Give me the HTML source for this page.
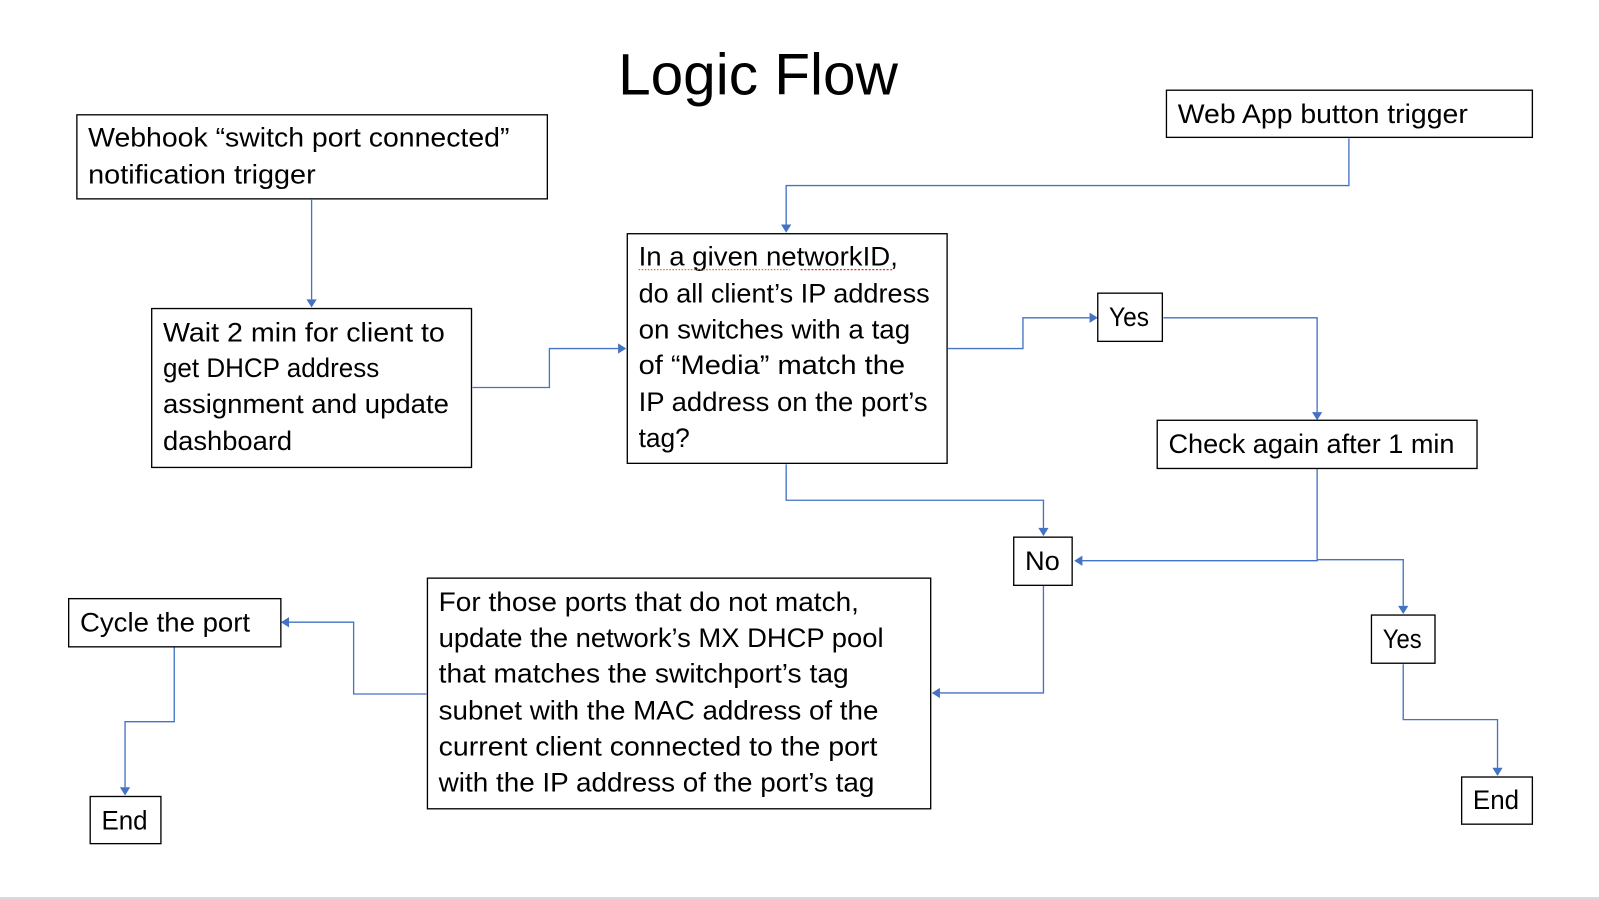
<!DOCTYPE html>
<html><head><meta charset="utf-8"><style>
html,body{margin:0;padding:0;background:#fff;}
svg{display:block;}
text{font-family:"Liberation Sans",sans-serif;fill:#000;}
.t{font-size:26px;}
.b{fill:#fff;stroke:#000;stroke-width:1.3;}
.l{fill:none;stroke:#4472c4;stroke-width:1.3;}
.a{fill:#4472c4;}
</style></head><body>
<svg width="1599" height="899" viewBox="0 0 1560 877" preserveAspectRatio="none">
<text x="603" y="92" font-size="57" textLength="273" lengthAdjust="spacingAndGlyphs">Logic Flow</text>
<line x1="0" y1="876" x2="1560" y2="876" stroke="#d9d9d9" stroke-width="2"/>

<path class="l" d="M304 195 V292"/><path class="a" d="M299 292 h10 l-5 8z"/>
<path class="l" d="M1316 135 V181 H767 V219"/><path class="a" d="M762 219 h10 l-5 8z"/>
<path class="l" d="M461 378 H536 V340 H603"/><path class="a" d="M603 335 v10 l8 -5z"/>
<path class="l" d="M925 340 H998 V310 H1063"/><path class="a" d="M1063 305 v10 l8 -5z"/>
<path class="l" d="M1135 310 H1285 V402"/><path class="a" d="M1280 402 h10 l-5 8z"/>
<path class="l" d="M767 453 V488 H1018 V515"/><path class="a" d="M1013 515 h10 l-5 8z"/>
<path class="l" d="M1285 457 V547 H1056"/><path class="a" d="M1056 542 v10 l-8 -5z"/>
<path class="l" d="M1285 546 H1369 V591"/><path class="a" d="M1364 591 h10 l-5 8z"/>
<path class="l" d="M1369 648 V702 H1461 V749"/><path class="a" d="M1456 749 h10 l-5 8z"/>
<path class="l" d="M1018 571 V676 H917"/><path class="a" d="M917 671 v10 l-8 -5z"/>
<path class="l" d="M416 677 H345 V607 H282"/><path class="a" d="M282 602 v10 l-8 -5z"/>
<path class="l" d="M170 631 V704 H122 V768"/><path class="a" d="M117 768 h10 l-5 8z"/>

<rect class="b" x="75" y="112" width="459" height="82"/>
<text class="t" x="86" y="143" textLength="411" lengthAdjust="spacingAndGlyphs">Webhook “switch port connected”</text>
<text class="t" x="86" y="179" textLength="222" lengthAdjust="spacingAndGlyphs">notification trigger</text>

<rect class="b" x="1138" y="88" width="357" height="46"/>
<text class="t" x="1149" y="120" textLength="283" lengthAdjust="spacingAndGlyphs">Web App button trigger</text>

<rect class="b" x="148" y="301" width="312" height="155"/>
<text class="t" x="159" y="333" textLength="275" lengthAdjust="spacingAndGlyphs">Wait 2 min for client to</text>
<text class="t" x="159" y="368" textLength="211" lengthAdjust="spacingAndGlyphs">get DHCP address</text>
<text class="t" x="159" y="403" textLength="279" lengthAdjust="spacingAndGlyphs">assignment and update</text>
<text class="t" x="159" y="439" textLength="126" lengthAdjust="spacingAndGlyphs">dashboard</text>

<rect class="b" x="612" y="228" width="312" height="224"/>
<text class="t" x="623" y="259" textLength="253" lengthAdjust="spacingAndGlyphs">In a given networkID,</text>
<path d="M623 263 H771" stroke="#c08030" stroke-width="1.2" stroke-dasharray="1.5 1.5"/>
<path d="M781 263 H871" stroke="#e03030" stroke-width="1.2" stroke-dasharray="2 1.5"/>
<text class="t" x="623" y="295" textLength="284" lengthAdjust="spacingAndGlyphs">do all client’s IP address</text>
<text class="t" x="623" y="330" textLength="265" lengthAdjust="spacingAndGlyphs">on switches with a tag</text>
<text class="t" x="623" y="365" textLength="260" lengthAdjust="spacingAndGlyphs">of “Media” match the</text>
<text class="t" x="623" y="401" textLength="282" lengthAdjust="spacingAndGlyphs">IP address on the port’s</text>
<text class="t" x="623" y="436" textLength="50" lengthAdjust="spacingAndGlyphs">tag?</text>

<rect class="b" x="1071" y="286" width="63" height="47"/>
<text class="t" x="1082" y="318" textLength="39" lengthAdjust="spacingAndGlyphs">Yes</text>

<rect class="b" x="1129" y="410" width="312" height="47"/>
<text class="t" x="1140" y="442" textLength="279" lengthAdjust="spacingAndGlyphs">Check again after 1 min</text>

<rect class="b" x="989" y="524" width="57" height="47"/>
<text class="t" x="1000" y="556" textLength="34" lengthAdjust="spacingAndGlyphs">No</text>

<rect class="b" x="1338" y="600" width="62" height="47"/>
<text class="t" x="1349" y="632" textLength="38" lengthAdjust="spacingAndGlyphs">Yes</text>

<rect class="b" x="1426" y="758" width="69" height="46"/>
<text class="t" x="1437" y="789" textLength="45" lengthAdjust="spacingAndGlyphs">End</text>

<rect class="b" x="417" y="564" width="491" height="225"/>
<text class="t" x="428" y="596" textLength="410" lengthAdjust="spacingAndGlyphs">For those ports that do not match,</text>
<text class="t" x="428" y="631" textLength="434" lengthAdjust="spacingAndGlyphs">update the network’s MX DHCP pool</text>
<text class="t" x="428" y="666" textLength="400" lengthAdjust="spacingAndGlyphs">that matches the switchport’s tag</text>
<text class="t" x="428" y="702" textLength="429" lengthAdjust="spacingAndGlyphs">subnet with the MAC address of the</text>
<text class="t" x="428" y="737" textLength="428" lengthAdjust="spacingAndGlyphs">current client connected to the port</text>
<text class="t" x="428" y="772" textLength="425" lengthAdjust="spacingAndGlyphs">with the IP address of the port’s tag</text>

<rect class="b" x="67" y="584" width="207" height="47"/>
<text class="t" x="78" y="616" textLength="166" lengthAdjust="spacingAndGlyphs">Cycle the port</text>

<rect class="b" x="88" y="777" width="69" height="46"/>
<text class="t" x="99" y="809" textLength="45" lengthAdjust="spacingAndGlyphs">End</text>
</svg>
</body></html>
